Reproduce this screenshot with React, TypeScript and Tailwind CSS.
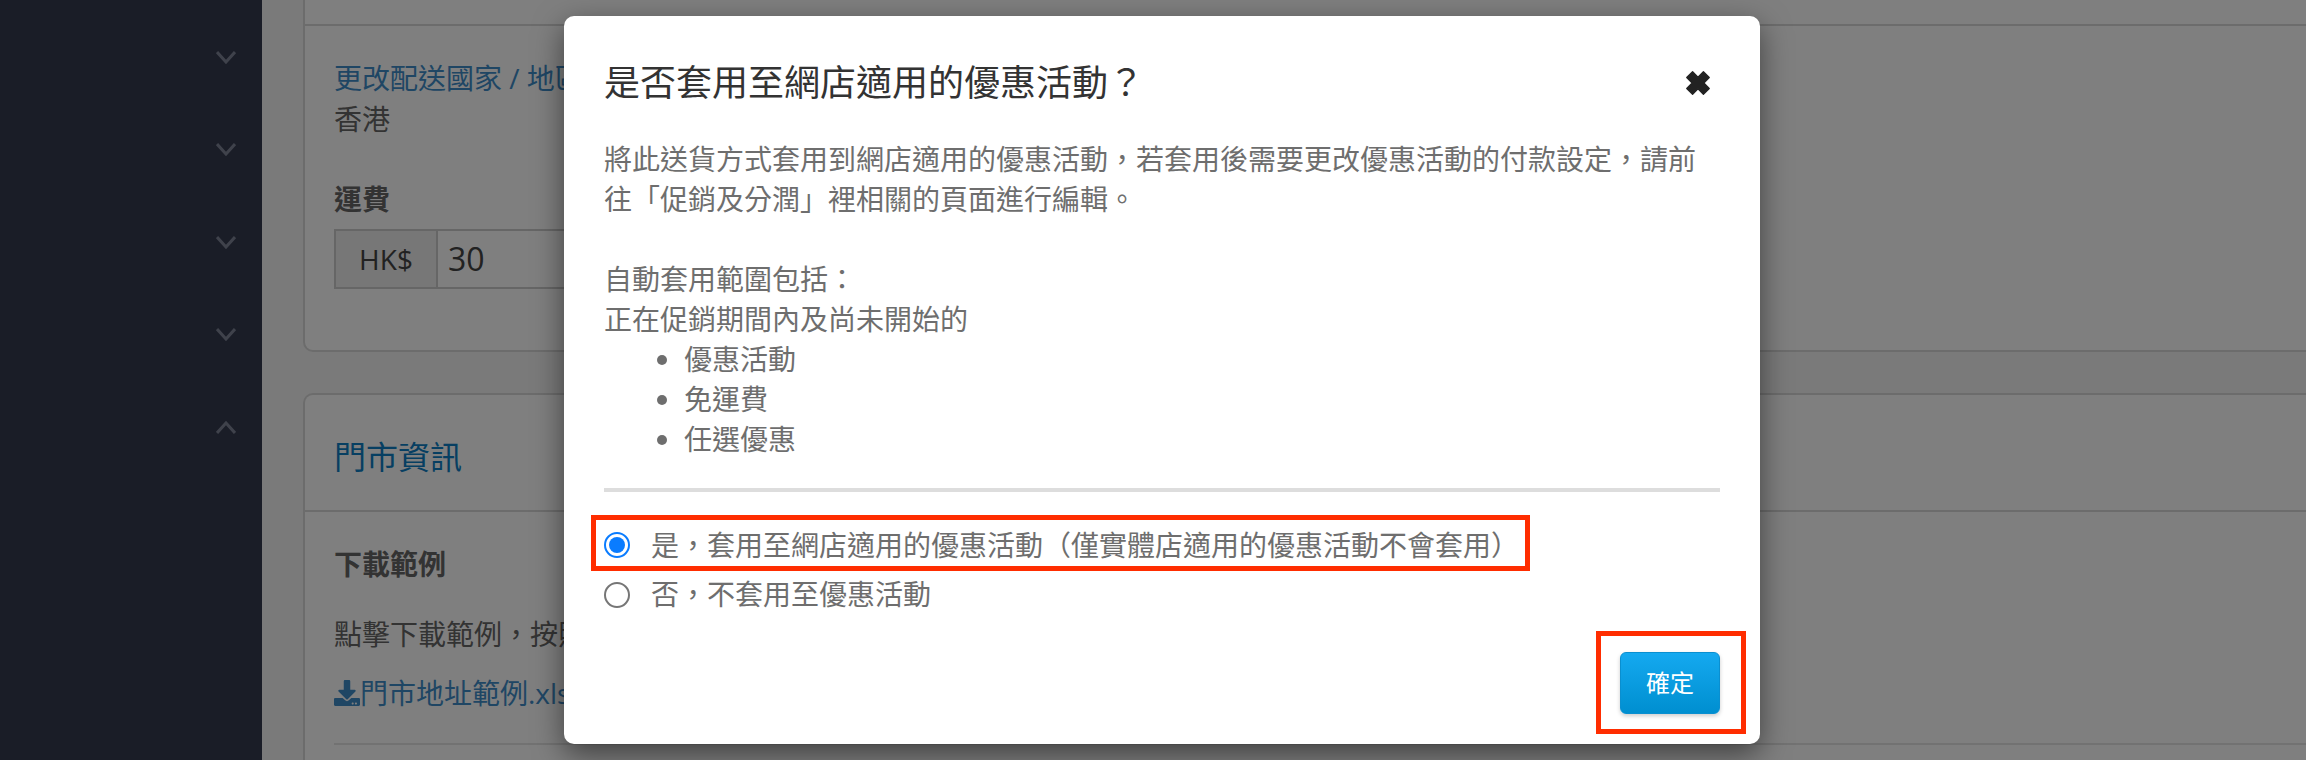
import { FaDownload } from 'react-icons/fa'

const SIDE_ITEMS = ['down', 'down', 'down', 'down', 'up']
const SCOPE_ITEMS = ['優惠活動', '免運費', '任選優惠']

function Chevron({ up }: { up: boolean }) {
  return (
    <svg viewBox="0 0 20 13" className="h-[13px] w-5" fill="none" stroke="#7f8497" strokeWidth="3">
      <polyline points={up ? '1,12 10,2 19,12' : '1,1 10,11 19,1'} />
    </svg>
  )
}

function CloseIcon() {
  return (
    <svg viewBox="0 0 24 24" className="mr-[9px] h-[26px] w-[26px]" fill="#222" stroke="#222" strokeWidth="1.2" strokeLinejoin="round">
      <polygon points="12,6.6 17,1.6 22.4,7 17.4,12 22.4,17 17,22.4 12,17.4 7,22.4 1.6,17 6.6,12 1.6,7 7,1.6" />
    </svg>
  )
}

function Radio({ checked }: { checked?: boolean }) {
  return (
    <span
      className={`flex h-[26px] w-[26px] shrink-0 items-center justify-center rounded-full border-2 bg-white ${
        checked ? 'border-[#0a7cff]' : 'border-[#767676]'
      }`}
    >
      {checked && <span className="h-4 w-4 rounded-full bg-[#0a7cff]" />}
    </span>
  )
}

function Sidebar() {
  return (
    <aside className="flex w-[262px] shrink-0 flex-col bg-[#343a4e] pt-[11px]">
      {SIDE_ITEMS.map((dir, i) => (
        <div key={i} className="flex h-[92.5px] items-center justify-end pr-[26px]">
          <Chevron up={dir === 'up'} />
        </div>
      ))}
    </aside>
  )
}

function Background() {
  return (
    <main className="min-w-0 flex-1 overflow-hidden bg-[#f4f4f4] pl-[41px] text-[28px] leading-[40px] text-[#666]">
      <section className="h-[352px] w-[2100px] rounded-b-[10px] border-2 border-t-0 border-[#d8d8d8] bg-white">
        <div className="h-[26px] border-b-2 border-[#d8d8d8]" />
        <div className="px-[29px] pt-[32px]">
          <a className="block text-[#3f8dc9]">更改配送國家 / 地區</a>
          <p className="mt-px">香港</p>
          <p className="mt-10 font-bold">運費</p>
          <div className="mt-[10px] flex h-[60px] w-[700px] border-2 border-[#ccc]">
            <span className="flex w-[102px] items-center justify-center border-r-2 border-[#ccc] bg-[#eee] text-[#444]">HK$</span>
            <span className="flex items-center pl-2.5 text-[32px] text-[#444]">30</span>
          </div>
        </div>
      </section>

      <section className="mt-[41px] h-[500px] w-[2100px] rounded-t-[10px] border-2 border-b-0 border-[#d8d8d8] bg-white">
        <div className="flex h-[117px] items-center border-b-2 border-[#d8d8d8] px-[29px] pt-2 text-[32px] text-[#0e7fc4]">
          門市資訊
        </div>
        <div className="px-[29px]">
          <p className="mt-[32px] font-bold">下載範例</p>
          <p className="mt-[30px]">點擊下載範例，按照範本填寫門市資訊後上傳</p>
          <a className="mt-[19px] flex items-center text-[#3f8dc9]">
            <FaDownload className="h-[26px] w-[26px]" />
            門市地址範例.xlsx
          </a>
          <div className="mt-[30px] h-0.5 bg-[#e4e4e4]" />
        </div>
      </section>
    </main>
  )
}

function Modal() {
  return (
    <div className="relative h-[728px] w-[1196px] rounded-[10px] bg-white px-10 pt-[42px] text-[28px] leading-[40px] text-[#6e6e6e] shadow-[0_10px_30px_rgba(0,0,0,0.5)]">
      <header className="flex h-[50px] items-center justify-between">
        <h2 className="text-[36px] leading-[50px] text-[#333]">是否套用至網店適用的優惠活動？</h2>
        <CloseIcon />
      </header>

      <div className="mt-[31px]">
        <p>將此送貨方式套用到網店適用的優惠活動，若套用後需要更改優惠活動的付款設定，請前往「促銷及分潤」裡相關的頁面進行編輯。</p>
        <p className="mt-10">自動套用範圍包括：</p>
        <p>正在促銷期間內及尚未開始的</p>
        <ul className="list-disc pl-[80px]">
          {SCOPE_ITEMS.map((item) => (
            <li key={item}>{item}</li>
          ))}
        </ul>
      </div>

      <div className="mt-[29px] h-1 bg-[#ddd]" />

      <div className="mt-[28px]">
        <label className="flex h-[50px] items-center gap-[21px]">
          <Radio checked />
          <span>是，套用至網店適用的優惠活動（僅實體店適用的優惠活動不會套用）</span>
        </label>
        <label className="flex h-[50px] items-center gap-[21px]">
          <Radio />
          <span className="-mt-0.5">否，不套用至優惠活動</span>
        </label>
      </div>

      <div className="mt-[32px] flex justify-end">
        <button className="h-[62px] w-[100px] rounded-md border border-[#0a8fd0] bg-gradient-to-b from-[#14a9f0] to-[#008fd0] text-[24px] text-white shadow-[0_2px_4px_rgba(0,0,0,0.2)]">
          確定
        </button>
      </div>

      {/* 스크린샷 위에 표시된 빨간 강조 박스 */}
      <div className="absolute left-[27px] top-[499px] h-[56px] w-[939px] border-[5px] border-[#ff2d00]" />
      <div className="absolute left-[1032px] top-[615px] h-[103px] w-[150px] border-[5px] border-[#ff2d00]" />
    </div>
  )
}

export default function App() {
  return (
    <div className="relative flex h-[760px] w-[2306px] overflow-hidden font-['Open_Sans','Noto_Sans_CJK_TC',sans-serif]">
      <Sidebar />
      <Background />
      <div className="absolute inset-0 bg-black/50 pl-[564px] pt-4">
        <Modal />
      </div>
    </div>
  )
}
